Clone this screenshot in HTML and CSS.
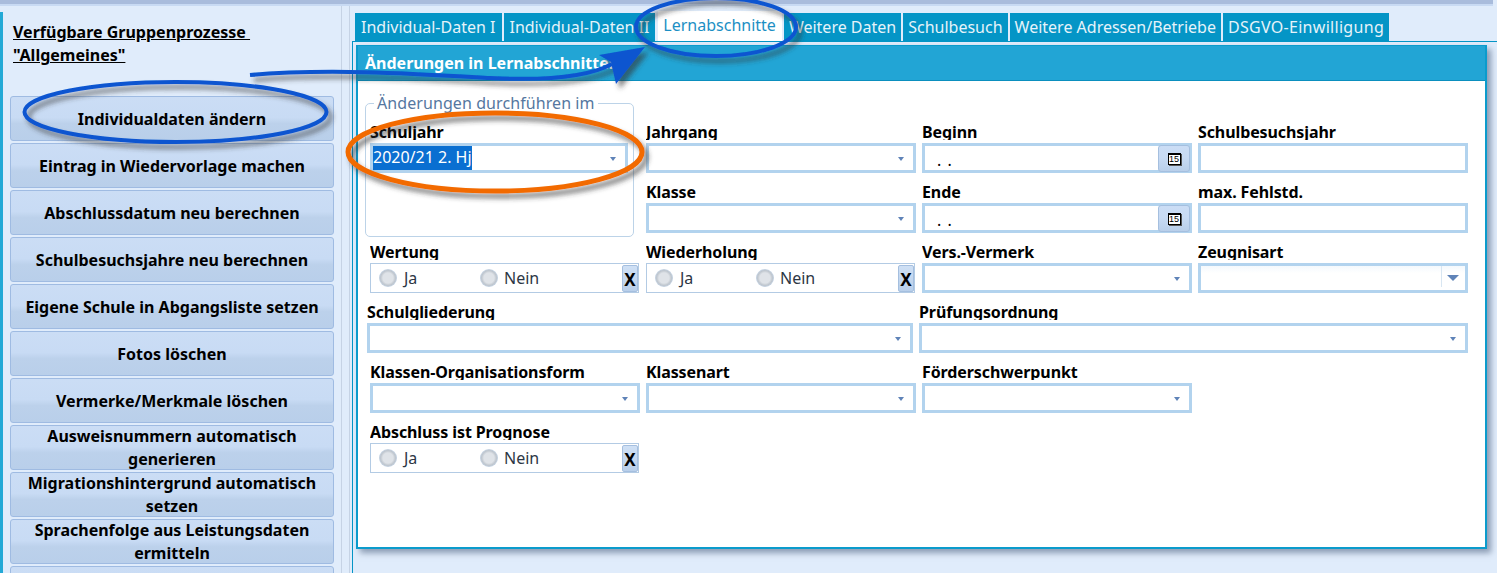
FILE: index.html
```html
<!DOCTYPE html>
<html lang="de">
<head>
<meta charset="utf-8">
<title>Gruppenprozesse</title>
<link rel="stylesheet" href="styles.css">
</head>
<body>
<div class="topstrip"></div>
<div class="app">
  <aside class="sidebar">
    <h1 class="side-title"><span>Verfügbare Gruppenprozesse&nbsp;</span><br><span>"Allgemeines"</span></h1>
    <div class="side-buttons">
      <button class="side-btn">Individualdaten ändern</button>
      <button class="side-btn">Eintrag in Wiedervorlage machen</button>
      <button class="side-btn">Abschlussdatum neu berechnen</button>
      <button class="side-btn">Schulbesuchsjahre neu berechnen</button>
      <button class="side-btn">Eigene Schule in Abgangsliste setzen</button>
      <button class="side-btn">Fotos löschen</button>
      <button class="side-btn">Vermerke/Merkmale löschen</button>
      <button class="side-btn">Ausweisnummern automatisch generieren</button>
      <button class="side-btn">Migrationshintergrund automatisch setzen</button>
      <button class="side-btn">Sprachenfolge aus Leistungsdaten ermitteln</button>
      <button class="side-btn"></button>
    </div>
  </aside>
  <div class="splitter"></div>
  <main class="main">
    <nav class="tabs">
      <a class="tab tab-first">Individual-Daten I</a>
      <a class="tab tab-second">Individual-Daten II</a>
      <a class="tab active">Lernabschnitte</a>
      <a class="tab">Weitere Daten</a>
      <a class="tab">Schulbesuch</a>
      <a class="tab">Weitere Adressen/Betriebe</a>
      <a class="tab tab-last">DSGVO-Einwilligung</a>
    </nav>
    <div class="tabpage">
      <section class="panel">
        <header class="panel-head">Änderungen in Lernabschnitten</header>
        <div class="form">
          <div class="groupbox"><span class="legend">Änderungen durchführen im</span></div>

          <div class="field"><label>Schuljahr</label><div class="combo short"><span class="selected">2020/21 2. Hj</span><i class="arrow"></i></div></div>
          <div class="field"><label>Jahrgang</label><div class="combo"><i class="arrow"></i></div></div>
          <div class="field"><label>Beginn</label><div class="combo date"><span class="dots">. .</span><button class="cal"><span class="cal-ico">15</span></button></div></div>
          <div class="field"><label>Schulbesuchsjahr</label><div class="combo"></div></div>

          <div class="field"></div>
          <div class="field"><label>Klasse</label><div class="combo"><i class="arrow"></i></div></div>
          <div class="field"><label>Ende</label><div class="combo date"><span class="dots">. .</span><button class="cal"><span class="cal-ico">15</span></button></div></div>
          <div class="field"><label>max. Fehlstd.</label><div class="combo"></div></div>

          <div class="field"><label>Wertung</label><div class="radios"><span class="radio"></span><span class="r-ja">Ja</span><span class="radio"></span><span class="r-nein">Nein</span><b class="clear">X</b></div></div>
          <div class="field"><label>Wiederholung</label><div class="radios"><span class="radio"></span><span class="r-ja">Ja</span><span class="radio"></span><span class="r-nein">Nein</span><b class="clear">X</b></div></div>
          <div class="field"><label>Vers.-Vermerk</label><div class="combo"><i class="arrow"></i></div></div>
          <div class="field"><label>Zeugnisart</label><div class="combo alt"><i class="alt-btn"><i class="arrow big"></i></i></div></div>

          <div class="wide-row">
            <div class="field"><label>Schulgliederung</label><div class="combo"><i class="arrow"></i></div></div>
            <div class="field"><label>Prüfungsordnung</label><div class="combo"><i class="arrow"></i></div></div>
          </div>

          <div class="field"><label>Klassen-Organisationsform</label><div class="combo"><i class="arrow"></i></div></div>
          <div class="field"><label>Klassenart</label><div class="combo"><i class="arrow"></i></div></div>
          <div class="field"><label>Förderschwerpunkt</label><div class="combo"><i class="arrow"></i></div></div>
          <div class="field"></div>

          <div class="field"><label>Abschluss ist Prognose</label><div class="radios"><span class="radio"></span><span class="r-ja">Ja</span><span class="radio"></span><span class="r-nein">Nein</span><b class="clear">X</b></div></div>
        </div>
      </section>
    </div>
  </main>
</div>
<svg class="annot" width="1497" height="573" viewBox="0 0 1497 573" aria-hidden="true">
  <defs>
    <filter id="sh" x="-20%" y="-40%" width="140%" height="190%">
      <feDropShadow dx="4" dy="5" stdDeviation="2.5" flood-color="#333" flood-opacity=".6"/>
    </filter>
  </defs>
  <g filter="url(#sh)" fill="none">
    <ellipse cx="175.500" cy="112" rx="151" ry="30" stroke="#0a55d0" stroke-width="4"/>
    <ellipse cx="495" cy="152" rx="147" ry="39" stroke="#f26b00" stroke-width="5"/>
    <ellipse cx="716" cy="27" rx="80" ry="29" stroke="#0a55d0" stroke-width="4"/>
    <path d="M250 75C330 68 420 74 490 78C550 81 590 76 612 64" stroke="#0a55d0" stroke-width="4"/>
    <path d="M645 47L599 55L611 62L616 84Z" fill="#0a55d0"/>
  </g>
</svg>
</body>
</html>
```

FILE: styles.css
```css
* { box-sizing: border-box; }
html, body { margin: 0; height: 573px; overflow: hidden; }
body {
  position: relative;
  background: #e0ecfb;
  font-family: "Noto Sans", "Open Sans", sans-serif;
  font-size: 16px;
  color: #000;
}
.topstrip {
  height: 6px;
  margin-right: 4px;
  background: linear-gradient(#a9bcdc 0 4px, #c8daf3 4px);
}
.app { display: flex; height: 567px; }

.sidebar {
  width: 341px;
  flex: none;
  margin-top: 6px;
  border-left: 3px solid #23a9d6;
  padding: 0 7px;
  overflow: hidden;
}
.side-title {
  margin: 9px 0 0 3px;
  font-size: 16px;
  font-weight: 700;
  line-height: 23px;
  height: 75px;
}
.side-title span { text-decoration: underline; }
.side-buttons { display: flex; flex-direction: column; gap: 2px; }
.side-btn {
  flex: none;
  height: 45px;
  width: 324px;
  padding: 1px 4px 0;
  font: 700 16px/23px "Noto Sans", "Open Sans", sans-serif;
  color: #000;
  border: 1px solid #9fbbe2;
  border-radius: 3px;
  background: linear-gradient(#cbddf5 0, #c8dbf4 48%, #bcd1eb 62%, #b9cfea 100%);
  display: flex;
  align-items: center;
  justify-content: center;
  text-align: center;
}

.splitter {
  width: 9px;
  flex: none;
  border-left: 1px solid #c6d3e5;
  border-right: 1px solid #c6d3e5;
}
.main { flex: 1; display: flex; flex-direction: column; padding-left: 2px; min-width: 0; }

.tabs { display: flex; gap: 2px; height: 35px; padding: 7px 0 0 3px; align-items: flex-end; }
.tab {
  height: 28px;
  padding: 0 5px;
  background: #0495c6;
  color: #e6f3fa;
  line-height: 29px;
  white-space: nowrap;
}
.tab-first { padding: 0 7px 0 6px; }
.tab-second { padding-right: 6px; }
.tab-last { letter-spacing: .3px; }
.tab.active {
  height: 30px;
  background: #fff;
  color: #1c8fc4;
  margin-left: 1px;
  padding: 0 6px 0 5px;
}
.tabpage {
  flex: 1;
  border-top: 1px solid #0495c6;
  border-left: 1px solid #0495c6;
  padding: 3px 10px 25px 3px;
}
.panel {
  height: 504px;
  background: #fff;
  border: 2px solid #0b9bcc;
  box-shadow: 4px 4px 6px rgba(70, 90, 120, .55);
}
.panel-head {
  height: 35px;
  background: #22a5d5;
  border-bottom: 1px solid #0b8fbe;
  color: #fff;
  font-weight: 700;
  padding: 5px 0 0 7px;
  line-height: 24px;
  margin-top: -1px;
}
.form {
  position: relative;
  display: grid;
  grid-template-columns: repeat(4, 270px);
  grid-auto-rows: 60px;
  column-gap: 6px;
  padding: 39px 0 0 12px;
}
.groupbox {
  position: absolute;
  left: 7px;
  top: 22px;
  width: 269px;
  height: 134px;
  border: 1px solid #bcd3e8;
  border-radius: 5px;
}
.legend {
  position: absolute;
  left: 8px;
  top: -11px;
  padding: 0 3px;
  background: #fff;
  color: #5577a0;
  line-height: 20px;
  letter-spacing: .08px;
}
.field { position: relative; min-width: 0; }
.field label {
  display: block;
  height: 20px;
  margin-bottom: 3px;
  font-weight: 700;
  line-height: 24px;
  letter-spacing: -.1px;
  overflow: hidden;
  white-space: nowrap;
}
.combo {
  position: relative;
  height: 30px;
  border: 3px solid #b2d3ee;
  background: #fff;
}
.combo.short { width: 258px; }
.arrow {
  position: absolute;
  right: 9px;
  top: 11px;
  width: 0;
  height: 0;
  border-left: 3.500px solid transparent;
  border-right: 3.500px solid transparent;
  border-top: 4px solid #5f83b8;
}
.arrow.big { right: 6px; top: 9px; border-left-width: 6px; border-right-width: 6px; border-top-width: 6px; }
.alt { background: linear-gradient(#f4f9fd, #fff 30%); }
.alt-btn {
  position: absolute;
  right: 0;
  top: 0;
  bottom: 3px;
  width: 24px;
  border-left: 1px solid #d8e6f2;
}
.selected {
  display: inline-block;
  height: 24px;
  background: #0a6fd1;
  color: #fff;
  line-height: 23px;
  white-space: nowrap;
}
.dots { position: absolute; left: 12px; top: 2px; line-height: 24px; letter-spacing: 1px; }
.cal {
  position: absolute;
  right: -1px;
  top: -1px;
  width: 32px;
  height: 27px;
  padding: 0;
  border: 1px solid #a5bfdf;
  border-radius: 3px;
  background: linear-gradient(#cbddf5, #c8dbf4 45%, #b9cfea);
  display: flex;
  align-items: center;
  justify-content: center;
}
.cal-ico {
  display: block;
  width: 13px;
  height: 12px;
  border: 1px solid #000;
  border-top-width: 2px;
  background: #fff;
  box-shadow: 1px 1px 0 #555;
  font: 9px/9px "Liberation Sans", sans-serif;
  text-align: center;
  color: #000;
}
.radios {
  position: relative;
  height: 30px;
  width: 269px;
  border: 1px solid #b3cbe4;
  display: flex;
  align-items: center;
  padding-left: 8px;
  color: #2c3644;
  background: #fff;
}
.radio {
  flex: none;
  width: 18px;
  height: 18px;
  border-radius: 50%;
  background: radial-gradient(circle, #dfe3e8 0 40%, #bfc6ce 58%, #c6d6e8 72%, #e0eaf5 100%);
}
.r-ja { width: 83px; padding-left: 7px; }
.r-nein { padding-left: 6px; }
.clear {
  position: absolute;
  right: 0;
  top: 1px;
  width: 16px;
  height: 27px;
  background: linear-gradient(#cfe0f5, #b9cfea);
  border: 1px solid #a5bfdf;
  border-radius: 2px;
  color: #000;
  text-align: center;
  line-height: 28px;
  font-size: 17px;
}
.wide-row {
  grid-column: 1 / -1;
  display: grid;
  grid-template-columns: 546px 549px;
  column-gap: 6px;
  margin-left: -3px;
}
.annot { position: absolute; left: 0; top: 0; pointer-events: none; }
```
